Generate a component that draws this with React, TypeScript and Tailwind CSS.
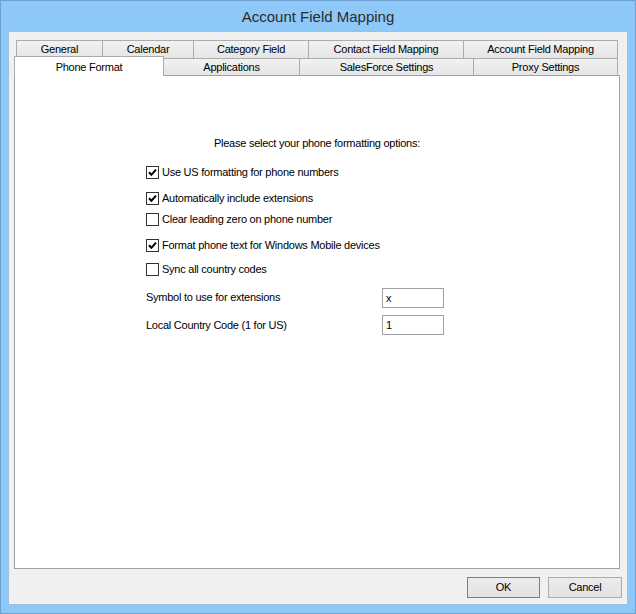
import React from "react";

const font = { fontFamily: '"Liberation Sans", Arial, sans-serif' };

function Tab({ label, w, first }: { label: string; w: string; first?: boolean }) {
  return (
    <div
      className={`${w} h-full flex items-center justify-center border-t border-r border-[#acacac] bg-gradient-to-b from-[#f2f2f2] to-[#e5e5e5] text-[11px] tracking-[-0.25px] text-black ${first ? "border-l" : ""}`}
    >
      {label}
    </div>
  );
}

function Check({ checked, label, className }: { checked: boolean; label: string; className?: string }) {
  return (
    <div className={`flex items-center h-[13px] ${className ?? ""}`}>
      <div className="w-[13px] h-[13px] border border-[#333333] bg-white flex items-center justify-center">
        {checked && (
          <svg width="9" height="9" viewBox="0 0 9 9">
            <path d="M1 4.3 L3.4 6.8 L8 1.6" stroke="#000" strokeWidth="2" fill="none" />
          </svg>
        )}
      </div>
      <span className="ml-[3px] text-[11px] tracking-[-0.25px] text-black leading-[13px]">{label}</span>
    </div>
  );
}

export default function App() {
  return (
    <div
      className="w-[636px] h-[614px] bg-[#8ec8f8] border border-[#6f9fcf] flex flex-col"
      style={font}
    >
      <div className="h-[30px] flex items-center justify-center text-[15px] text-[#2b2b2b] pt-[2px]">
        Account Field Mapping
      </div>
      <div className="mx-[7px] h-[574px] bg-[#f0f0f0] border border-[#9cc0e0] flex flex-col">
        <div className="pt-[8px] pl-[5px] flex flex-col">
          <div className="ml-[2px] h-[18px] flex">
            <Tab label="General" w="w-[87px]" first />
            <Tab label="Calendar" w="w-[91px]" />
            <Tab label="Category Field" w="w-[115px]" />
            <Tab label="Contact Field Mapping" w="w-[155px]" />
            <Tab label="Account Field Mapping" w="w-[154px]" />
          </div>
          <div className="h-[17px] flex items-start">
            <div className="relative z-10 w-[150px] h-[20px] -mt-[2px] bg-white border-t border-x border-[#acacac] flex items-start justify-center pt-[2px] text-[11px] tracking-[-0.25px] text-black">
              Phone Format
            </div>
            <Tab label="Applications" w="w-[136px]" />
            <Tab label="SalesForce Settings" w="w-[174px]" />
            <Tab label="Proxy Settings" w="w-[144px]" />
          </div>
          <div className="w-[606px] h-[494px] bg-white border border-[#a0a0a0] flex flex-col">
            <div className="mt-[60px] text-center text-[11px] tracking-[-0.25px] text-black leading-[14px]">
              Please select your phone formatting options:
            </div>
            <div className="pl-[131px] flex flex-col">
              <Check checked label="Use US formatting for phone numbers" className="mt-[16px]" />
              <Check checked label="Automatically include extensions" className="mt-[13px]" />
              <Check checked={false} label="Clear leading zero on phone number" className="mt-[8px]" />
              <Check checked label="Format phone text for Windows Mobile devices" className="mt-[13px]" />
              <Check checked={false} label="Sync all country codes" className="mt-[11px]" />
              <div className="mt-[12px] flex items-center h-[20px]">
                <span className="w-[236px] text-[11px] tracking-[-0.25px] text-black -mt-[2px]">Symbol to use for extensions</span>
                <div className="w-[62px] h-[20px] border border-[#a0a0a0] bg-white flex items-center pl-[3px] text-[11px] text-black">
                  x
                </div>
              </div>
              <div className="mt-[7px] flex items-center h-[20px]">
                <span className="w-[236px] text-[11px] tracking-[-0.25px] text-black">Local Country Code (1 for US)</span>
                <div className="w-[62px] h-[20px] border border-[#a0a0a0] bg-white flex items-center pl-[3px] text-[11px] text-black">
                  1
                </div>
              </div>
            </div>
          </div>
        </div>
        <div className="mt-[8px] flex justify-end pr-[5px] gap-[8px]">
          <div className="w-[73px] h-[21px] border border-[#3c8ce0] bg-gradient-to-b from-[#ececec] to-[#e2e2e2] flex items-center justify-center text-[11px] tracking-[-0.25px] text-black">
            OK
          </div>
          <div className="w-[74px] h-[21px] border border-[#acacac] bg-gradient-to-b from-[#ececec] to-[#e2e2e2] flex items-center justify-center text-[11px] tracking-[-0.25px] text-black">
            Cancel
          </div>
        </div>
      </div>
    </div>
  );
}
